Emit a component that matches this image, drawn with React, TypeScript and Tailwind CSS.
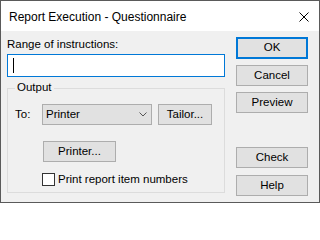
import type { ReactNode } from "react";

const FONT = { fontFamily: '"Segoe UI", "Liberation Sans", Arial, sans-serif' };

function DlgButton({
  children,
  className = "",
  focused = false,
}: {
  children: ReactNode;
  className?: string;
  focused?: boolean;
}) {
  return (
    <button
      type="button"
      className={`flex h-[21px] items-center justify-center bg-[#e1e1e1] text-[11.5px] leading-none text-black ${
        focused ? "border-2 border-[#0078d7]" : "border border-[#adadad]"
      } ${className}`}
    >
      {children}
    </button>
  );
}

export default function App() {
  return (
    <div
      className="flex h-[203px] w-[320px] flex-col border border-[#5a5a5a] bg-[#f0f0f0] text-[11.5px] text-black"
      style={FONT}
    >
      <div className="flex h-[30px] shrink-0 items-center justify-between bg-white pl-[8px] pr-[10px]">
        <span className="pt-[1px] text-[12px]">Report Execution - Questionnaire</span>
        <svg width="10" height="10" viewBox="0 0 10 10" className="mt-[2px]">
          <path d="M0.5 0.5 L9.5 9.5 M9.5 0.5 L0.5 9.5" stroke="#000" strokeWidth="1" />
        </svg>
      </div>

      <div className="flex flex-1 pl-[6px] pr-[10px]">
        <div className="flex w-[218px] flex-col pt-[6px]">
          <label className="leading-[15px]">Range of instructions:</label>
          <div className="mt-[2px] flex h-[23px] items-center border border-[#0078d7] bg-white pl-[5px]">
            <div className="h-[15px] w-px bg-black" />
          </div>

          <div className="relative mt-[11px] flex h-[105px] flex-col border border-[#dcdcdc] pl-[7px] pt-[15px]">
            <span className="absolute left-[7px] top-[-9px] bg-[#f0f0f0] px-[2px] leading-[15px]">
              Output
            </span>
            <div className="flex items-center">
              <span className="w-[27px] leading-[15px]">To:</span>
              <div className="flex h-[21px] w-[110px] items-center justify-between border border-[#adadad] bg-[#e1e1e1] pl-[3px] pr-[4px]">
                <span>Printer</span>
                <svg width="8" height="5" viewBox="0 0 8 5">
                  <path d="M0.5 0.5 L4 4 L7.5 0.5" fill="none" stroke="#555" strokeWidth="1" />
                </svg>
              </div>
              <DlgButton className="ml-[6px] w-[54px]">Tailor...</DlgButton>
            </div>
            <DlgButton className="ml-[28px] mt-[16px] w-[73px]">Printer...</DlgButton>
            <div className="ml-[27px] mt-[10px] flex items-center">
              <div className="h-[13px] w-[13px] border border-[#333] bg-white" />
              <span className="ml-[3px] leading-[15px]">Print report item numbers</span>
            </div>
          </div>
        </div>

        <div className="ml-[11px] flex w-[72px] flex-col pt-[6px]">
          <DlgButton focused className="h-[22px]">OK</DlgButton>
          <DlgButton className="mt-[6px]">Cancel</DlgButton>
          <DlgButton className="mt-[6px]">Preview</DlgButton>
          <DlgButton className="mt-[34px]">Check</DlgButton>
          <DlgButton className="mt-[7px]">Help</DlgButton>
        </div>
      </div>
    </div>
  );
}
